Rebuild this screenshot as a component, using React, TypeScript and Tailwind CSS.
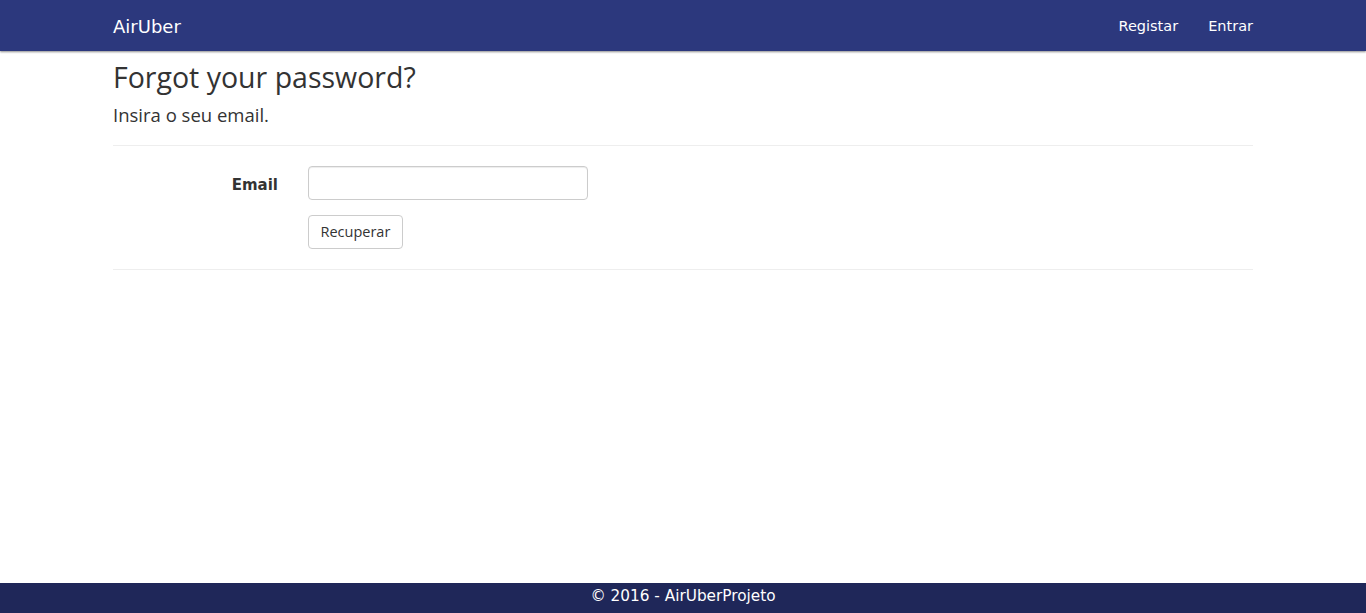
export default function App() {
  return (
    <div className="min-h-[613px] flex flex-col bg-white text-[#333]" style={{ fontFamily: '"Open Sans", sans-serif' }}>
      <nav className="h-[51px] bg-[#2c387d] shadow-[0_1px_2px_rgba(0,0,0,0.45)] relative z-10">
        <div className="w-[1140px] mx-auto h-full flex items-center justify-between pt-[1px]">
          <span className="text-white text-[18px]" style={{ fontFamily: '"DejaVu Sans", sans-serif' }}>AirUber</span>
          <div className="flex gap-[30px] text-white text-[14.5px] pt-[1px]" style={{ fontFamily: '"DejaVu Sans", sans-serif' }}>
            <span>Registar</span>
            <span>Entrar</span>
          </div>
        </div>
      </nav>
      <main className="flex-1">
        <div className="w-[1140px] mx-auto">
          <h2 className="text-[28.5px] leading-[33px] mt-[10px]">Forgot your password?</h2>
          <h4 className="text-[18.5px] leading-[22px] mt-[10px]">Insira o seu email.</h4>
          <hr className="mt-[19px] border-t border-[#eee]" />
          <div className="flex items-center mt-[20px]">
            <label className="w-[165px] text-right text-[15px] font-bold pt-[4px]" style={{ fontFamily: '"DejaVu Sans", sans-serif' }}>Email</label>
            <input className="ml-[30px] w-[280px] h-[34px] border border-[#ccc] rounded-[4px] shadow-[inset_0_1px_1px_rgba(0,0,0,0.075)]" />
          </div>
          <div className="mt-[15px] ml-[195px]">
            <button className="h-[34px] px-[11.5px] border border-[#ccc] rounded-[4px] bg-white text-[14.5px] text-[#333]">Recuperar</button>
          </div>
          <hr className="mt-[20px] border-t border-[#eee]" />
        </div>
      </main>
      <footer className="h-[30px] bg-[#1f2759] flex items-center justify-center text-white text-[15.3px] pb-[3px]" style={{ fontFamily: '"DejaVu Sans", sans-serif' }}>
        © 2016 - AirUberProjeto
      </footer>
    </div>
  );
}
